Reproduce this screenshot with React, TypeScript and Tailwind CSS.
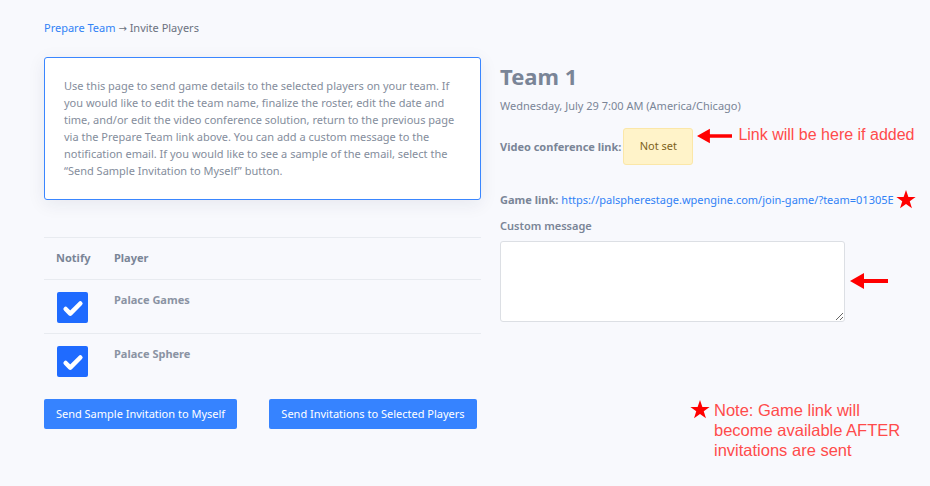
import { Check } from "lucide-react";

const players = ["Palace Games", "Palace Sphere"];

function RedArrow({ className = "" }: { className?: string }) {
  return (
    <svg viewBox="0 0 38 16" className={className} fill="#ff0000">
      <polygon points="0,8 14,0 14,6 38,6 38,10 14,10 14,16" />
    </svg>
  );
}

function RedStar({ className = "" }: { className?: string }) {
  return (
    <svg viewBox="0 0 24 24" className={className} fill="#ff0000">
      <polygon points="12,1 14.6,8.6 22.5,8.6 16.1,13.3 18.5,21 12,16.3 5.5,21 7.9,13.3 1.5,8.6 9.4,8.6" />
    </svg>
  );
}

export default function App() {
  return (
    <div className="min-h-[486px] w-[930px] bg-[#f8f9fd] font-['Noto_Sans',sans-serif] text-[#7a8597]">
      <div className="flex pl-[44px] pt-[20px]">
        {/* left column */}
        <div className="w-[437px] shrink-0">
          <div className="text-[11px] leading-[16px]">
            <span className="text-[#3182f6]">Prepare Team</span>
            <span className="text-[#6b7280]">
              {" "}
              <span className="font-['DejaVu_Sans',sans-serif] text-[10px]">→</span> Invite Players
            </span>
          </div>

          <div className="mt-[20px] h-[143px] rounded-[3px] border border-[#3a86ff] bg-white px-[19px] pt-[19px] text-[11px] leading-[17px] text-[#848d9c] shadow-[0_4px_18px_rgba(30,40,80,0.08)]">
            Use this page to send game details to the selected players on your team. If you would like to edit the team name, finalize the roster, edit the date and time, and/or edit the video conference solution, return to the previous page via the Prepare Team link above. You can add a custom message to the notification email. If you would like to see a sample of the email, select the “Send Sample Invitation to Myself” button.
          </div>

          <div className="mt-[37px] border-t border-[#e8ebf0]">
            <div className="flex h-[41px] items-center text-[11px] font-bold text-[#7a8597]">
              <div className="w-[70px] pl-[12px]">Notify</div>
              <div>Player</div>
            </div>
            {players.map((p, i) => (
              <div
                key={p}
                className={`flex h-[55px] pt-[12px] ${i === 0 ? "border-y border-[#e8ebf0]" : ""}`}
              >
                <div className="w-[70px] pl-[13px]">
                  <div className="flex h-[31px] w-[31px] items-center justify-center rounded-[2px] bg-[#1f6bff]">
                    <Check className="mt-[2px] h-[22px] w-[22px] text-white" strokeWidth={5} />
                  </div>
                </div>
                <div className="text-[11px] font-bold leading-[16px] text-[#8a93a3]">{p}</div>
              </div>
            ))}
          </div>

          <div className="mt-[10px] flex gap-[32px]">
            <button className="h-[30px] w-[193px] rounded-[2px] bg-[#3683ff] text-[11px] text-white">
              Send Sample Invitation to Myself
            </button>
            <button className="h-[30px] w-[208px] rounded-[2px] bg-[#3683ff] text-[11px] text-white">
              Send Invitations to Selected Players
            </button>
          </div>
        </div>

        {/* right column */}
        <div className="ml-[19px] flex-1 pt-[42px]">
          <div className="text-[22px] font-bold leading-[28px] text-[#7a8597]">Team 1</div>
          <div className="mt-[8px] text-[11px] leading-[16px] text-[#7a8597]">
            Wednesday, July 29 7:00 AM (America/Chicago)
          </div>

          <div className="mt-[14px] flex items-start">
            <span className="mt-[11px] text-[11px] font-bold text-[#7a8597]">Video conference link:</span>
            <div className="ml-[2px] flex h-[37px] w-[70px] items-center justify-center rounded-[3px] border border-[#fbe7a8] bg-[#fff3c9] text-[11px] text-[#7d6220]">
              Not set
            </div>
            <RedArrow className="ml-[4px] h-[16px] w-[35px]" />
            <span className="ml-[6px] -mt-[3px] font-['Liberation_Sans',sans-serif] text-[16px] leading-[20px] text-[#ff4b4b]">
              Link will be here if added
            </span>
          </div>

          <div className="mt-[24px] flex items-center text-[11px]">
            <span className="font-bold text-[#7a8597]">Game link:</span>
            <span className="ml-[3px] text-[#3182f6]">https://palspherestage.wpengine.com/join-game/?team=01305E</span>
            <RedStar className="ml-[1px] h-[22px] w-[22px]" />
          </div>

          <div className="mt-[7px] text-[11px] font-semibold text-[#7a8597]">Custom message</div>

          <div className="mt-[6px] flex items-center">
            <textarea className="h-[81px] w-[345px] rounded-[3px] border border-[#dcdfe4] bg-white" />
            <RedArrow className="ml-[5px] h-[16px] w-[38px]" />
          </div>

          <div className="ml-[189px] mt-[78px] flex items-start">
            <RedStar className="-mt-[1px] h-[22px] w-[22px]" />
            <div className="ml-[3px] font-['Liberation_Sans',sans-serif] text-[16.5px] leading-[20px] text-[#ff4b4b]">
              Note: Game link will
              <br />
              become available AFTER
              <br />
              invitations are sent
            </div>
          </div>
        </div>
      </div>
    </div>
  );
}
